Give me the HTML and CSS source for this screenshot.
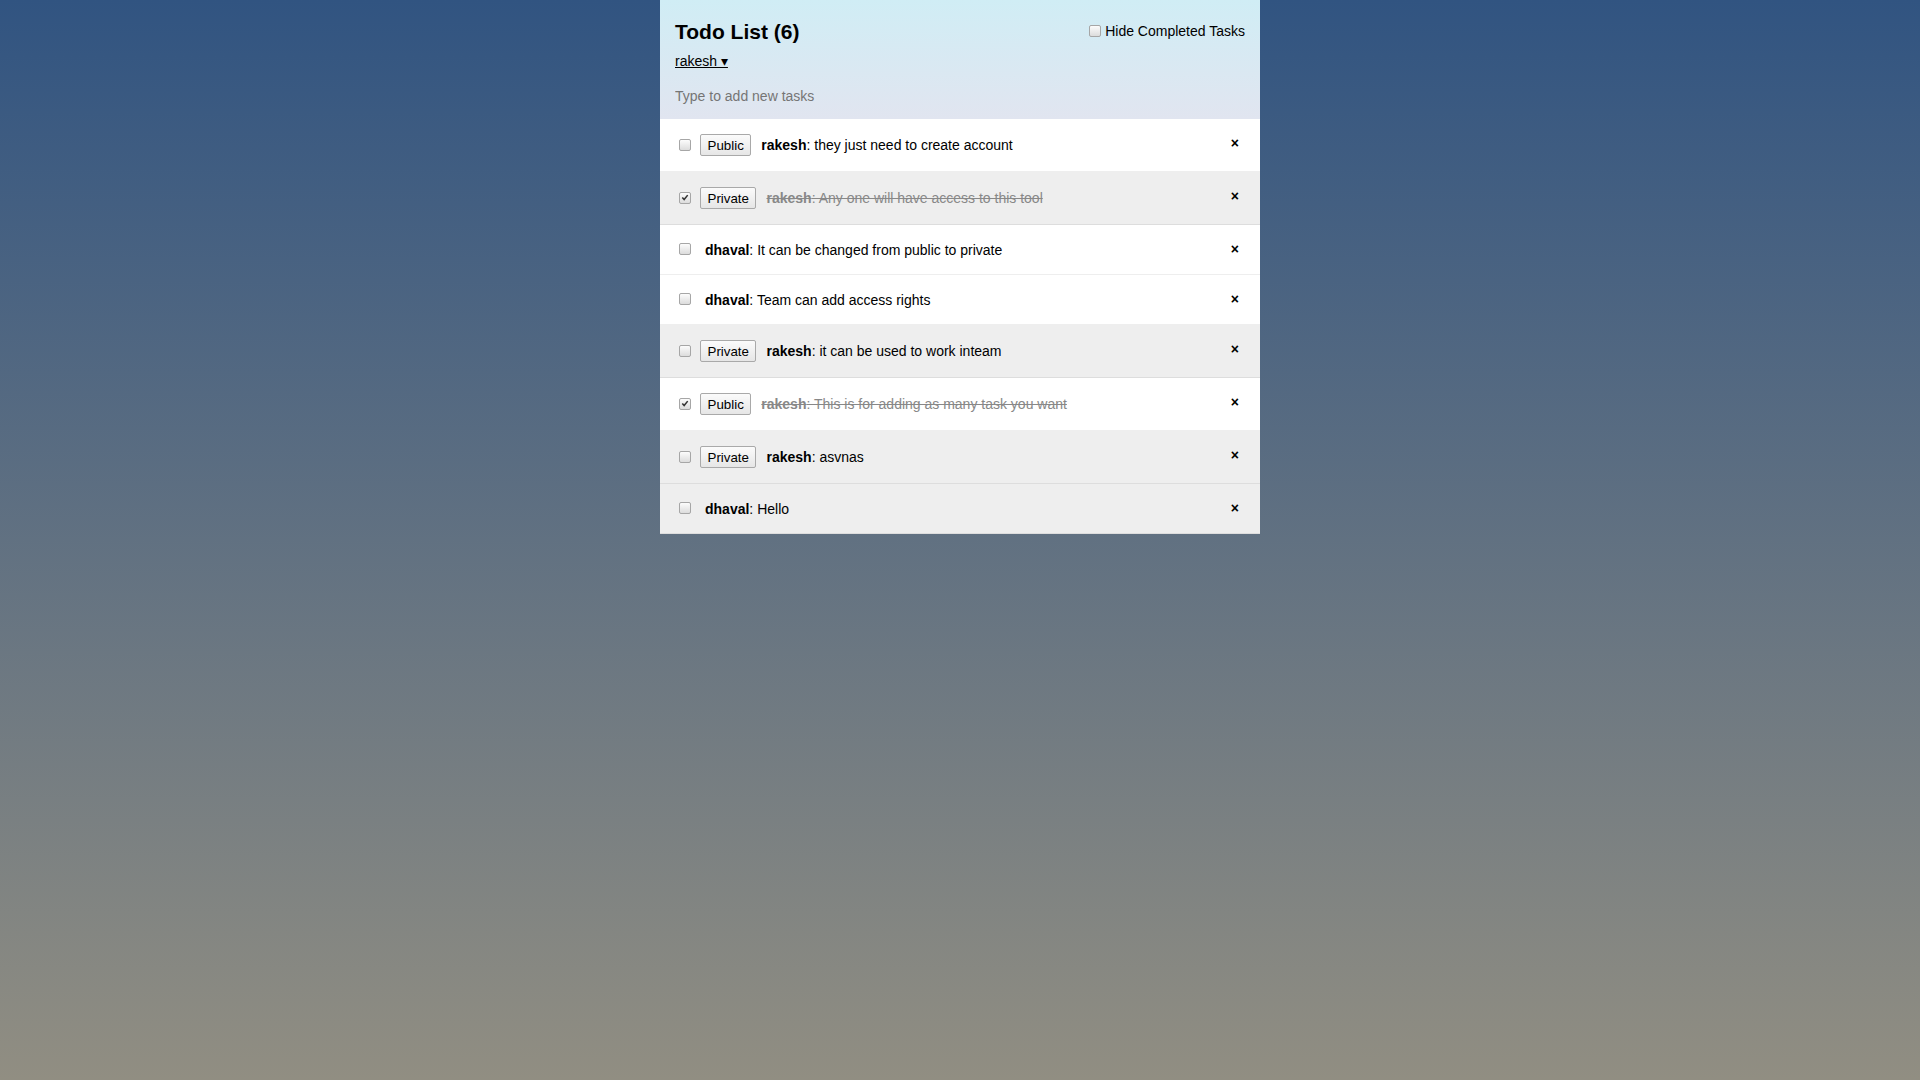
FILE: index.html
```html
<!DOCTYPE html>
<html lang="en">
<head>
<meta charset="utf-8">
<title>Todo List</title>
<link rel="stylesheet" href="styles.css">
</head>
<body>
<div class="container">
  <header class="header">
    <div class="header-top">
      <h1 class="title">Todo List (6)</h1>
      <label class="hide-completed"><span class="cb"></span>Hide Completed Tasks</label>
    </div>
    <div class="login"><a class="login-link">rakesh ▾</a></div>
    <form class="new-task"><input type="text" name="text" placeholder="Type to add new tasks"></form>
  </header>
  <ul class="tasks">
    <li class="task">
      <span class="cb"></span><button class="toggle">Public</button><span class="text"><strong>rakesh</strong>: they just need to create account</span>
      <button class="delete">&times;</button>
    </li>
    <li class="task private checked">
      <span class="cb on"><svg viewBox="0 0 13 13" width="13" height="13"><path d="M3 6.6 L5.4 9.2 L10 3.4" fill="none" stroke="#333" stroke-width="2"/></svg></span><button class="toggle">Private</button><span class="text"><strong>rakesh</strong>: Any one will have access to this tool</span>
      <button class="delete">&times;</button>
    </li>
    <li class="task">
      <span class="cb"></span><span class="text"><strong>dhaval</strong>: It can be changed from public to private</span>
      <button class="delete">&times;</button>
    </li>
    <li class="task">
      <span class="cb"></span><span class="text"><strong>dhaval</strong>: Team can add access rights</span>
      <button class="delete">&times;</button>
    </li>
    <li class="task private">
      <span class="cb"></span><button class="toggle">Private</button><span class="text"><strong>rakesh</strong>: it can be used to work inteam</span>
      <button class="delete">&times;</button>
    </li>
    <li class="task checked">
      <span class="cb on"><svg viewBox="0 0 13 13" width="13" height="13"><path d="M3 6.6 L5.4 9.2 L10 3.4" fill="none" stroke="#333" stroke-width="2"/></svg></span><button class="toggle">Public</button><span class="text"><strong>rakesh</strong>: This is for adding as many task you want</span>
      <button class="delete">&times;</button>
    </li>
    <li class="task private">
      <span class="cb"></span><button class="toggle">Private</button><span class="text"><strong>rakesh</strong>: asvnas</span>
      <button class="delete">&times;</button>
    </li>
    <li class="task private">
      <span class="cb"></span><span class="text"><strong>dhaval</strong>: Hello</span>
      <button class="delete">&times;</button>
    </li>
  </ul>
</div>
</body>
</html>
```

FILE: styles.css
```css
html, body {
  height: 100%;
}
body {
  margin: 0;
  padding: 0;
  font-family: "Liberation Sans", Arial, sans-serif;
  font-size: 14px;
  color: #000;
  background-color: #315481;
  background-image: linear-gradient(to bottom, #315481, #918e82 100%);
  background-attachment: fixed;
}
.container {
  width: 600px;
  margin: 0 auto;
  background: #fff;
}
.header {
  background: #d2edf4;
  background-image: linear-gradient(to bottom, #d0edf5, #e1e5f0 100%);
  padding: 20px 15px 12px 15px;
}
.header-top {
  display: flex;
  justify-content: space-between;
  align-items: flex-start;
}
.title {
  font-size: 21px;
  line-height: 24px;
  font-weight: bold;
  margin: 0 0 9px 0;
}
.hide-completed {
  display: flex;
  align-items: center;
  margin-top: 3px;
  line-height: 16px;
}
.hide-completed .cb {
  margin: 0 4px 0 0;
}
.login {
  line-height: 16px;
}
.login-link {
  color: #000;
  text-decoration: underline;
  cursor: pointer;
}
.new-task {
  margin: 10px 0 0 0;
}
.new-task input {
  box-sizing: border-box;
  width: 100%;
  padding: 9px 0 3px 0;
  border: none;
  background: transparent;
  font-family: "Liberation Sans", Arial, sans-serif;
  font-size: 14px;
  line-height: 16px;
  outline: none;
}
.new-task input::placeholder {
  color: #757575;
}
.tasks {
  margin: 0;
  padding: 0;
  list-style: none;
  background: #fff;
}
.task {
  display: flex;
  align-items: center;
  padding: 15px;
  border-bottom: 1px solid #eee;
  line-height: 16px;
}
.task.private {
  background: #eee;
  border-color: #ddd;
}
.cb {
  box-sizing: border-box;
  display: inline-flex;
  align-items: center;
  justify-content: center;
  width: 12px;
  height: 12px;
  margin: 3px 0 4px 4px;
  border: 1px solid #a6a6a6;
  border-radius: 2px;
  background: linear-gradient(to bottom, #fcfcfc, #dcdcdc);
  flex: none;
}
.cb svg {
  width: 11px;
  height: 11px;
}
.toggle {
  box-sizing: border-box;
  height: 22px;
  margin: 0 0 0 9px;
  padding: 1px 6.5px;
  border: 1px solid #a9a9a9;
  border-radius: 2px;
  background: linear-gradient(to bottom, #fbfbfb, #e6e6e6);
  font-family: "Liberation Sans", Arial, sans-serif;
  font-size: 13.33px;
  color: #000;
}
.text {
  margin-left: 10px;
}
.cb + .text {
  margin-left: 14px;
}
.text strong {
  font-weight: bold;
}
.task.checked {
  color: #888;
}
.task.checked .text {
  text-decoration: line-through;
}
.delete {
  margin-left: auto;
  align-self: flex-start;
  padding: 1px 6px;
  border: none;
  background: none;
  font-family: "Liberation Sans", Arial, sans-serif;
  font-size: 14px;
  font-weight: bold;
  line-height: 16px;
  color: #000;
}
```
